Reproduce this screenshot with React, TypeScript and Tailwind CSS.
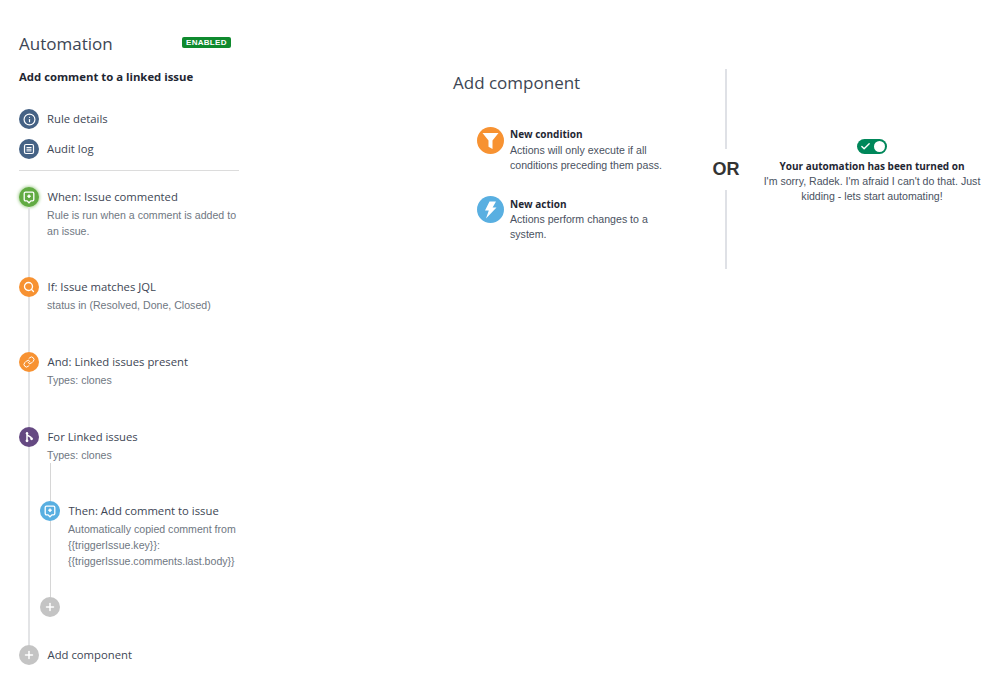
import { Check, Info, Link, Plus, Search } from 'lucide-react';
import type { ReactNode } from 'react';

const headingFont = "font-['Open_Sans',sans-serif]";

const CommentIcon = () => (
	<svg width="12" height="13" viewBox="0 0 12 13" fill="none" stroke="white">
		<path d="M2.500 1.200h7a1.300 1.300 0 0 1 1.300 1.300v6a1.300 1.300 0 0 1-1.300 1.300H8L6 11.800 4 9.800H2.500a1.300 1.300 0 0 1-1.300-1.300v-6a1.300 1.300 0 0 1 1.300-1.300z" strokeWidth="1.300" />
		<path d="M6 3.500v3.400M4.300 5.200h3.400" strokeWidth="1.500" />
	</svg>
);

const BranchIcon = () => (
	<svg width="12" height="12" viewBox="0 0 12 12" fill="none" stroke="white" strokeWidth="1.500">
		<path d="M4 2v8M4 3c0 2.500 4 2 4.400 4.400" />
		<circle cx="4" cy="2.200" r="1.200" fill="white" stroke="none" />
		<circle cx="4" cy="9.800" r="1.400" fill="white" stroke="none" />
		<circle cx="8.600" cy="7.800" r="1.400" fill="white" stroke="none" />
	</svg>
);

const AuditIcon = () => (
	<svg width="12" height="12" viewBox="0 0 12 12" fill="none" stroke="white">
		<rect x="1.500" y="1.500" width="9" height="9" rx="1.500" strokeWidth="1.200" />
		<path d="M3.500 4.500h5M3.500 6.200h5M3.500 7.900h5" strokeWidth="1" />
	</svg>
);

const FunnelIcon = () => (
	<svg width="17" height="18" viewBox="0 0 17 18" fill="white">
		<path d="M0.500 1h16l-6 7.500V17l-4-2.200V8.500z" />
	</svg>
);

const BoltIcon = () => (
	<svg width="13" height="18" viewBox="0 0 13 18" fill="white">
		<path d="M5.500 0.500H12L8.600 6.500H12.500L2 17.500 4.800 9.500H1z" />
	</svg>
);

const Dot = ({ className, children }: { className: string; children: ReactNode }) => (
	<div className={`flex h-5 w-5 shrink-0 items-center justify-center rounded-full text-white ${className}`}>
		{children}
	</div>
);

const Step = ({
	icon,
	title,
	lineClass = 'w-[2px] bg-[#e3e4e6]',
	line = true,
	className,
	children,
}: {
	icon: ReactNode;
	title: string;
	lineClass?: string;
	line?: boolean;
	className: string;
	children?: ReactNode;
}) => (
	<div className={`flex ${className}`}>
		<div className="flex w-5 shrink-0 flex-col items-center">
			{icon}
			{line && <div className={`flex-1 ${lineClass}`} />}
		</div>
		<div className="ml-2 min-w-0 flex-1 whitespace-nowrap">
			<div className={`${headingFont} h-5 pl-[0.5px] text-[11.3px] leading-5 text-[#3d4654]`}>{title}</div>
			{children}
		</div>
	</div>
);

const Desc = ({ children }: { children: ReactNode }) => (
	<div className="text-[10.6px] leading-[16px] text-[#6f7782]">{children}</div>
);

export default function App() {
	return (
		<div className="flex h-[673px] w-[999px] overflow-hidden bg-white font-['Liberation_Sans',sans-serif]">
			<div className="ml-[19px] w-[220px] shrink-0 pt-[32px]">
				<div className="flex h-6 items-center">
					<h1 className={`${headingFont} w-[163px] text-[17px] leading-6 text-[#3d4654]`}>Automation</h1>
					<span className="-mt-[4px] rounded-[2px] bg-[#0f8a2e] px-1 text-[8px] leading-[11px] font-bold tracking-[0.3px] text-white">
						ENABLED
					</span>
				</div>
				<h2 className={`${headingFont} mt-[12px] h-[18px] text-[11.35px] leading-[18px] font-bold text-[#1f2733]`}>
					Add comment to a linked issue
				</h2>
				<div className="mt-[23px] flex h-5 items-center gap-2">
					<Dot className="bg-[#456285]">
						<Info size={13} strokeWidth={2.2} />
					</Dot>
					<span className={`${headingFont} text-[11.3px] text-[#3d4654]`}>Rule details</span>
				</div>
				<div className="mt-[10px] flex h-5 items-center gap-2">
					<Dot className="bg-[#456285]">
						<AuditIcon />
					</Dot>
					<span className={`${headingFont} text-[11.3px] text-[#3d4654]`}>Audit log</span>
				</div>
				<div className="mt-[11px] h-px bg-[#dcdcdc]" />

				<div className="mt-[16px]">
					<Step
						className="h-[90px]"
						title="When: Issue commented"
						icon={
							<Dot className="bg-[#62ab43] shadow-[0_0_3px_1px_#b5d9a5]">
								<CommentIcon />
							</Dot>
						}
					>
						<Desc>
							Rule is run when a comment is added to
							<br />
							an issue.
						</Desc>
					</Step>
					<Step
						className="h-[75px]"
						title="If: Issue matches JQL"
						icon={
							<Dot className="bg-[#f79232]">
								<Search size={12} strokeWidth={2.6} />
							</Dot>
						}
					>
						<Desc>status in (Resolved, Done, Closed)</Desc>
					</Step>
					<Step
						className="h-[75px]"
						title="And: Linked issues present"
						icon={
							<Dot className="bg-[#f79232]">
								<Link size={12} strokeWidth={2} />
							</Dot>
						}
					>
						<Desc>Types: clones</Desc>
					</Step>
					<Step
						className="h-[218px]"
						title="For Linked issues"
						icon={
							<Dot className="bg-[#654982]">
								<BranchIcon />
							</Dot>
						}
					>
						<Desc>Types: clones</Desc>
						<div className="-ml-[7px] flex h-[38px] w-5 justify-center">
							<div className="w-px bg-[#d6d6d6]" />
						</div>
						<div className="-ml-[7px]">
							<Step
								className="h-[96px]"
								lineClass="w-px bg-[#d6d6d6]"
								title="Then: Add comment to issue"
								icon={
									<Dot className="bg-[#59afe1]">
										<CommentIcon />
									</Dot>
								}
							>
								<Desc>
									Automatically copied comment from
									<br />
									{'{{triggerIssue.key}}:'}
									<br />
									{'{{triggerIssue.comments.last.body}}'}
								</Desc>
							</Step>
							<Dot className="bg-[#c4c4c4]">
								<Plus size={12} strokeWidth={3} />
							</Dot>
						</div>
					</Step>
					<Step
						className="h-5"
						line={false}
						title="Add component"
						icon={
							<Dot className="bg-[#c4c4c4]">
								<Plus size={12} strokeWidth={3} />
							</Dot>
						}
					/>
				</div>
			</div>

			<div className="ml-[214px] w-[259px] shrink-0 pt-[70px]">
				<h2 className={`${headingFont} h-[26px] text-[17px] leading-[26px] text-[#3d4654]`}>Add component</h2>
				<div className="mt-[31px] ml-6 flex gap-[6px]">
					<div className="flex h-[27px] w-[27px] shrink-0 items-center justify-center rounded-full bg-[#f79232]">
						<FunnelIcon />
					</div>
					<div>
						<div className={`${headingFont} h-4 text-[10px] leading-[15px] font-bold text-[#1f2733]`}>New condition</div>
						<div className="text-[10.6px] leading-[15px] text-[#4a5261]">
							Actions will only execute if all
							<br />
							conditions preceding them pass.
						</div>
					</div>
				</div>
				<div className="mt-[24px] ml-6 flex gap-[6px]">
					<div className="-mt-px flex h-[27px] w-[27px] shrink-0 items-center justify-center rounded-full bg-[#59afe1]">
						<BoltIcon />
					</div>
					<div>
						<div className={`${headingFont} h-[15px] text-[10px] leading-[15px] font-bold text-[#1f2733]`}>New action</div>
						<div className="text-[10.6px] leading-[15px] text-[#4a5261]">
							Actions perform changes to a
							<br />
							system.
						</div>
					</div>
				</div>
			</div>

			<div className="flex w-[28px] shrink-0 flex-col items-center pt-[69px]">
				<div className="h-[80px] w-[2px] bg-[#dfe1e6]" />
				<div className="flex h-[41px] items-center text-[18px] font-bold text-[#333333]">OR</div>
				<div className="h-[79px] w-[2px] bg-[#dfe1e6]" />
			</div>

			<div className="ml-[20px] flex w-[224px] shrink-0 flex-col items-center pt-[139px] text-center">
				<div className="relative flex h-[15px] w-[30px] items-center rounded-full bg-[#00875a]">
					<Check size={11} strokeWidth={3} className="ml-[3px] text-white" />
					<div className="absolute top-[2px] right-[2px] h-[11px] w-[11px] rounded-full bg-white" />
				</div>
				<div className={`${headingFont} mt-[5px] text-[10px] leading-[15px] font-bold text-[#1f2733]`}>
					Your automation has been turned on
				</div>
				<div className="text-[10.6px] leading-[15px] text-[#4a5261]">
					I'm sorry, Radek. I'm afraid I can't do that. Just
					<br />
					kidding - lets start automating!
				</div>
			</div>
		</div>
	);
}
